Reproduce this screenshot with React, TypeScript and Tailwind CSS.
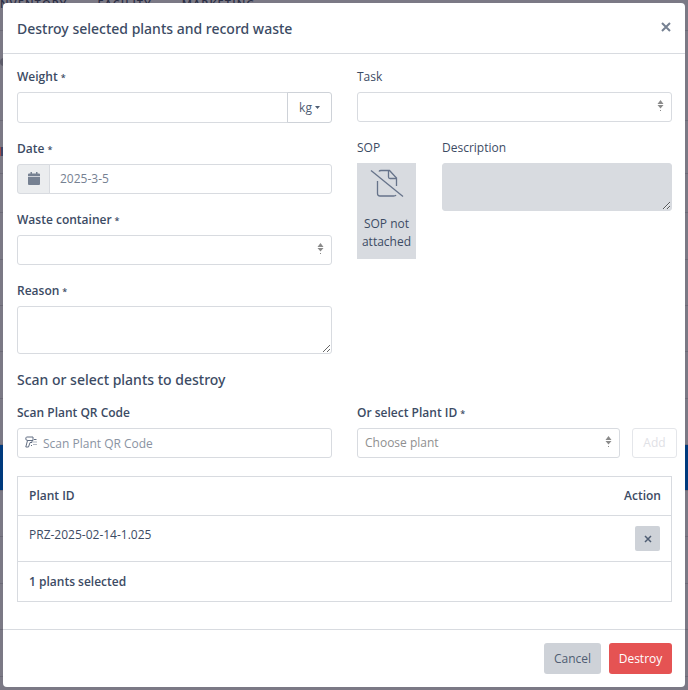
import React, { useState } from 'react'

interface Option {
  value: string
  label: string
}

interface SelectBoxProps {
  id: string
  options: Option[]
  muted?: boolean
}

const inputBase =
  'w-full rounded-[3px] border border-[#d8dbe0] px-2 outline-none placeholder:text-[#8a93a2]'

const headingFont = "font-['Noto_Sans',sans-serif] text-[14px] font-medium"

const pageRows = [
  { id: 'head', style: 'h-[39px]' },
  { id: 'row-1', style: 'h-[47px]' },
  { id: 'row-2', style: 'h-[46px]' },
  { id: 'row-3', style: 'h-[46px]' },
  { id: 'row-4', style: 'h-[47px]' },
  { id: 'row-5', style: 'h-[46px]' },
  { id: 'selected', style: 'h-[46px] bg-[#003a7d]' },
  { id: 'row-6', style: 'h-[46px]' },
  { id: 'row-7', style: 'h-[47px]' },
  { id: 'row-8', style: 'h-[46px]' },
  { id: 'row-9', style: 'h-[47px]' }
]

function Required() {
  return <span className="ml-[3px] text-[9px]">*</span>
}

function Label({ htmlFor, bold, children }: { htmlFor: string; bold?: boolean; children: React.ReactNode }) {
  return (
    <label htmlFor={htmlFor} className={`mb-1.5 block h-[18px] leading-[18px] ${bold ? 'font-semibold' : ''}`}>
      {children}
    </label>
  )
}

function SelectBox({ id, options, muted }: SelectBoxProps) {
  return (
    <div className="relative">
      <select
        id={id}
        className={`${inputBase} h-[30px] appearance-none bg-white pl-[7px] ${muted ? 'text-[#8f8f8f]' : ''}`}
      >
        {options.map((option) => (
          <option key={option.value} value={option.value}>
            {option.label}
          </option>
        ))}
      </select>
      <svg className="pointer-events-none absolute top-2 right-2 h-3 w-[7px]" viewBox="0 0 7 12" fill="#8a8a8a">
        <path d="M3.500 0 6.500 4H.5zM.5 5h6l-3 3.500zM3 10h1v1H3z" />
      </svg>
    </div>
  )
}

function PageBackdrop() {
  return (
    <div className="absolute inset-0 overflow-hidden bg-[#7b7985]" aria-hidden="true">
      <div className="flex h-[31px] gap-[30px] border-b border-[#6c6a77] text-[11px] leading-[8px] font-semibold tracking-widest text-[#2b2f45]">
        <span>NVENTORY</span>
        <span>FACILITY</span>
        <span>MARKETING</span>
      </div>
      <div className="h-[90px] border-b border-[#6c6a77] pt-[27px]">
        <div className="h-2 w-2 rounded-full bg-[#5c5b69]" />
      </div>
      <div className="h-[53px] border-b border-[#6c6a77] pt-[26px]">
        <div className="h-[9px] w-2 border-l border-[#9a4a4a] bg-[#3c4668]" />
      </div>
      {pageRows.map((row) => (
        <div key={row.id} className={`border-b border-[#6c6a77] ${row.style}`} />
      ))}
    </div>
  )
}

export default function App() {
  const [date, setDate] = useState('2025-3-5')

  return (
    <div className="relative min-h-screen p-[3px] font-['Open_Sans','Noto_Sans',sans-serif] text-[12px] text-[#3c4b64]">
      <PageBackdrop />

      <div role="dialog" aria-labelledby="dialog-title" className="relative rounded-[4px] bg-white">
        <header className="flex h-[51px] items-center justify-between border-b border-[#d8dbe0] px-3.5">
          <h1 id="dialog-title" className={headingFont}>
            Destroy selected plants and record waste
          </h1>
          <button type="button" aria-label="Close" className="text-[#768192]">
            <svg className="h-3 w-3" viewBox="0 0 12 12" fill="none" stroke="currentColor" strokeWidth="2">
              <path d="M3 1l8 8M11 1l-8 8" />
            </svg>
          </button>
        </header>

        <div className="pt-3.5 pr-[13px] pb-[27px] pl-3.5">
          <div className="grid grid-cols-2 gap-x-[25px]">
            <div className="space-y-[17px]">
              <div>
                <Label htmlFor="weight" bold>
                  Weight
                  <Required />
                </Label>
                <div className="flex h-[31px]">
                  <input id="weight" className={`${inputBase} rounded-r-none`} />
                  <button
                    type="button"
                    className="-ml-px flex w-[45px] shrink-0 items-center justify-center gap-[3px] rounded-r-[3px] border border-[#ced2d8] text-[#4f5d73]"
                  >
                    kg
                    <svg className="h-[3px] w-[5px]" viewBox="0 0 5 3" fill="currentColor">
                      <path d="M0 0h5L2.500 3z" />
                    </svg>
                  </button>
                </div>
              </div>

              <div>
                <Label htmlFor="date" bold>
                  Date
                  <Required />
                </Label>
                <div className="flex h-[30px]">
                  <span className="-mr-px flex w-[33px] shrink-0 items-center justify-center rounded-l-[3px] border border-[#d8dbe0] bg-[#ebedef] pb-0.5 text-[#768192]">
                    <svg className="h-[13px] w-3" viewBox="0 0 12 13" fill="currentColor">
                      <path d="M2.500 0h1.500v1.500h4V0h1.500v1.500H11a1 1 0 0 1 1 1V4H0V2.500a1 1 0 0 1 1-1h1.500zM0 4.700h12V12a1 1 0 0 1-1 1H1a1 1 0 0 1-1-1z" />
                    </svg>
                  </span>
                  <input
                    id="date"
                    value={date}
                    onChange={(e) => setDate(e.target.value)}
                    className={`${inputBase} rounded-l-none pl-2.5 text-[#768192]`}
                  />
                </div>
              </div>

              <div>
                <Label htmlFor="container" bold>
                  Waste container
                  <Required />
                </Label>
                <SelectBox id="container" options={[{ value: '', label: '' }]} />
              </div>

              <div>
                <Label htmlFor="reason" bold>
                  Reason
                  <Required />
                </Label>
                <textarea id="reason" className={`${inputBase} block h-12`} />
              </div>
            </div>

            <div className="space-y-[17px]">
              <div>
                <Label htmlFor="task">Task</Label>
                <SelectBox id="task" options={[{ value: '', label: '' }]} />
              </div>

              <div className="flex gap-[26px]">
                <div className="w-[59px] shrink-0">
                  <p className="mb-1.5 leading-[18px]">SOP</p>
                  <div className="flex h-24 flex-col items-center bg-[#d8dbe0] pt-1.5 text-center leading-[18px]">
                    <svg
                      className="mb-[17px] h-[29px] w-[34px] shrink-0"
                      viewBox="0 0 34 29"
                      fill="none"
                      stroke="#66738a"
                      strokeWidth="1.3"
                    >
                      <path d="M1 1.500l32 26" />
                      <path d="M9 2.500Q9.500 1.500 11 1.500h8.500l7 7.500v8" />
                      <path d="M18.500 1.500v6.500q0 1.500 1.500 1.500h6.500" />
                      <path d="M7.500 12v12.500q0 2.500 2.500 2.500h13.500q2 0 2.500-1" />
                    </svg>
                    SOP not attached
                  </div>
                </div>
                <div className="flex-1">
                  <Label htmlFor="description">Description</Label>
                  <textarea id="description" readOnly className={`${inputBase} block h-12 bg-[#d8dbe0]`} />
                </div>
              </div>
            </div>
          </div>

          <h2 className={`mt-3.5 mb-3 leading-6 ${headingFont}`}>Scan or select plants to destroy</h2>

          <div className="grid grid-cols-2 gap-x-[25px]">
            <div>
              <Label htmlFor="scan" bold>
                Scan Plant QR Code
              </Label>
              <div className="relative">
                <input id="scan" placeholder="Scan Plant QR Code" className={`${inputBase} h-[30px] pl-[25px]`} />
                <svg
                  className="pointer-events-none absolute top-2 left-2 h-3 w-3"
                  viewBox="0 0 12 12"
                  fill="none"
                  stroke="#636f83"
                >
                  <path d="M1.500 1h6.500v3.500H3Q.8 4.500.8 3T1.500 1zM2.500 4.500.8 11h2.700L5 6.500h2V4.500" />
                  <path d="M9 3.500h2.500M8.500 6h1M10.500 6h1M8.500 8.500h1M10.500 8.500h1M6 9.500h1" />
                </svg>
              </div>
            </div>
            <div className="-mr-[5px] flex items-end gap-3">
              <div className="flex-1">
                <Label htmlFor="plant" bold>
                  Or select Plant ID
                  <Required />
                </Label>
                <SelectBox id="plant" muted options={[{ value: '', label: 'Choose plant' }]} />
              </div>
              <button
                type="button"
                disabled
                className="h-[30px] w-[45px] rounded-[3px] border border-[#e4e6ea] text-[#dfe1e6]"
              >
                Add
              </button>
            </div>
          </div>

          <table className="mt-[18px] w-full border-collapse border border-[#d8dbe0]">
            <thead>
              <tr className="h-[39px] border-b border-[#d8dbe0]">
                <th className="px-[11px] text-left font-semibold">Plant ID</th>
                <th className="px-[10px] text-right font-semibold">Action</th>
              </tr>
            </thead>
            <tbody>
              <tr className="h-[46px] border-b border-[#d8dbe0]">
                <td className="px-[11px] pt-[10px] align-top">PRZ-2025-02-14-1.025</td>
                <td className="px-[11px]">
                  <button
                    type="button"
                    aria-label="Remove plant"
                    className="ml-auto flex h-[25px] w-[25px] items-center justify-center rounded-[2px] bg-[#ced2d8]"
                  >
                    <svg className="h-2 w-2" viewBox="0 0 8 8" fill="none" stroke="#4f5d73" strokeWidth="1.5">
                      <path d="M1 1l6 6M7 1L1 7" />
                    </svg>
                  </button>
                </td>
              </tr>
            </tbody>
            <tfoot>
              <tr className="h-10">
                <td colSpan={2} className="px-[11px] font-semibold">
                  1 plants selected
                </td>
              </tr>
            </tfoot>
          </table>
        </div>

        <footer className="flex justify-end gap-2 border-t border-[#d8dbe0] py-[13px] pr-[13px]">
          <button type="button" className="h-[31px] w-[57px] rounded-[3px] bg-[#ced2d8] text-[#4f5d73]">
            Cancel
          </button>
          <button type="button" className="h-[31px] w-[63px] rounded-[3px] bg-[#e55353] text-white">
            Destroy
          </button>
        </footer>
      </div>
    </div>
  )
}
